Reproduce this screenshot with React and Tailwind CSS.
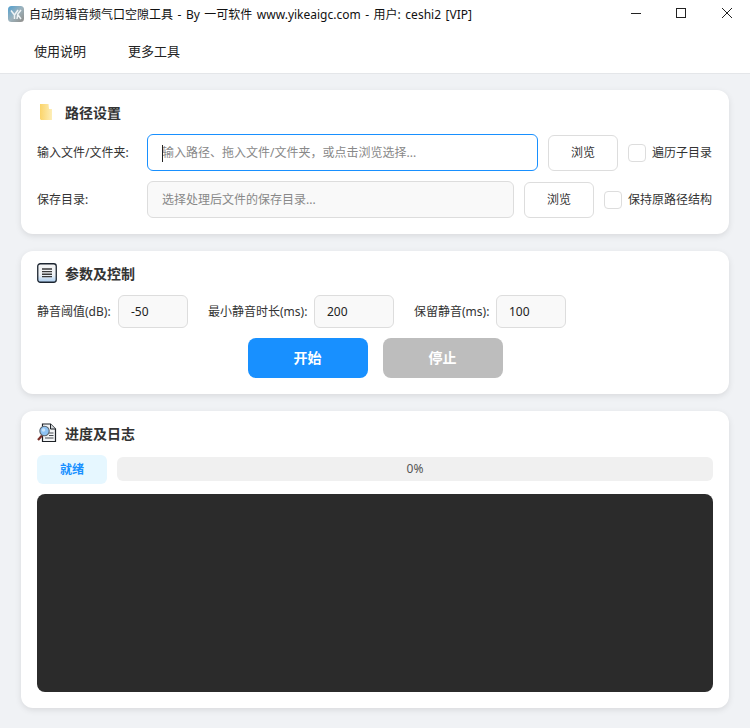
import React from 'react';

const FONT = 'font-["Noto_Sans","Noto_Sans_CJK_SC",sans-serif]';

function AppIcon() {
  return (
    <svg width="16" height="16" viewBox="0 0 16 16" className="shrink-0 -mt-[2px]">
      <defs>
        <linearGradient id="appBg" x1="0" y1="0" x2="1" y2="1">
          <stop offset="0" stopColor="#4f9fd0" />
          <stop offset="0.5" stopColor="#9db3bd" />
          <stop offset="1" stopColor="#8f8c88" />
        </linearGradient>
      </defs>
      <rect width="16" height="16" rx="3.5" fill="url(#appBg)" />
      <path d="M3 4.5 L6.5 9 V13 M10 4 L6.5 9 M9 13 L9.8 8 L13 4 M10 9 L13 13" stroke="#eef3f5" strokeWidth="1.5" fill="none" />
    </svg>
  );
}

function FolderIcon() {
  return (
    <svg width="20" height="20" viewBox="0 0 20 20" className="shrink-0">
      <defs>
        <linearGradient id="folderBg" x1="0" y1="0" x2="1" y2="0">
          <stop offset="0" stopColor="#fbd46a" />
          <stop offset="1" stopColor="#fdeeb8" />
        </linearGradient>
      </defs>
      <path d="M3 2 H11.5 L12 7 H15 V18 H4 L3 17 Z" fill="url(#folderBg)" />
    </svg>
  );
}

function ListIcon() {
  return (
    <svg width="20" height="20" viewBox="0 0 20 20" className="shrink-0">
      <defs>
        <linearGradient id="listBg" x1="0" y1="0" x2="0" y2="1">
          <stop offset="0" stopColor="#f4f4f4" />
          <stop offset="0.6" stopColor="#eef2f6" />
          <stop offset="1" stopColor="#a9cdf0" />
        </linearGradient>
      </defs>
      <rect x="0.75" y="0.75" width="18.5" height="18.5" rx="2.5" fill="url(#listBg)" stroke="#1c2530" strokeWidth="1.3" />
      <path d="M5 6 H15 M5 8.6 H15 M5 11.2 H15 M5 13.6 H15" stroke="#3a3a3a" strokeWidth="1.4" />
    </svg>
  );
}

function SearchDocIcon() {
  return (
    <svg width="20" height="20" viewBox="0 0 20 20" className="shrink-0">
      <path d="M5.5 1 H13.5 L18.5 6 V18.5 H5.5 Z" fill="#f2f4f6" stroke="#1d2126" strokeWidth="1.2" />
      <path d="M13.5 1 V6 H18.5" fill="#d5d9dd" stroke="#1d2126" strokeWidth="1" />
      <path d="M12 10 H16.5 M12 12.5 H16.5 M8 15 H16.5" stroke="#4a4f55" strokeWidth="1" />
      <path d="M5 12.5 L1 17" stroke="#7a2f28" strokeWidth="2.2" />
      <circle cx="7.5" cy="8" r="4.7" fill="#8fc4f5" stroke="#5b6670" strokeWidth="1.1" />
      <circle cx="6.5" cy="7" r="1.8" fill="#c7e3fb" />
    </svg>
  );
}

function CardTitle({ icon, children }) {
  return (
    <div className="flex items-center gap-2 h-5">
      {icon}
      <h2 className="relative top-px text-sm leading-5 font-bold text-[#333333]">{children}</h2>
    </div>
  );
}

function Card({ className, children }) {
  return (
    <section className={`bg-white rounded-xl shadow-[0_2px_6px_rgba(0,0,0,0.1)] ${className}`}>
      {children}
    </section>
  );
}

function BrowseButton() {
  return (
    <button className="w-[70px] h-9 shrink-0 rounded-md border border-[#dddddd] bg-white text-xs text-[#333333]">
      浏览
    </button>
  );
}

function PathRow({ label, placeholder, check, focused }) {
  return (
    <div className="flex items-center h-[37px]">
      <label className="w-[110px] shrink-0 text-xs text-[#333333]">{label}</label>
      <div
        className={`relative flex-1 h-[37px] rounded-md flex items-center pl-[14px] text-xs text-[#888888] border ${
          focused ? 'border-[#1890ff] bg-white' : 'border-[#dddddd] bg-[#f9f9f9]'
        }`}
      >
        {focused && <span className="absolute left-[14px] top-[10px] w-px h-[17px] bg-[#222222]" />}
        {placeholder}
      </div>
      <div className="ml-[10px]">
        <BrowseButton />
      </div>
      <span className="ml-[10px] w-[18px] h-[18px] shrink-0 rounded border border-[#dddddd] bg-white" />
      <span className="ml-[6px] pr-px text-xs text-[#333333] whitespace-nowrap">{check}</span>
    </div>
  );
}

function NumField({ label, value, labelWidth, width, className }) {
  return (
    <div className={`flex items-center gap-[6px] ${className}`}>
      <label className={`text-xs text-[#333333] whitespace-nowrap ${labelWidth}`}>{label}</label>
      <div className={`h-[33px] rounded-md border border-[#dddddd] bg-[#f9f9f9] flex items-center pl-[12px] text-xs text-[#222222] ${width}`}>
        {value}
      </div>
    </div>
  );
}

export default function App() {
  return (
    <div className={`${FONT} w-[750px] h-[728px] flex flex-col bg-[#f0f2f5] overflow-hidden`}>
      {/* Title bar */}
      <header className="bg-white h-[30px] shrink-0 flex items-center pl-2">
        <AppIcon />
        <span className="ml-[5px] text-xs text-[#111111] whitespace-nowrap [word-spacing:1.4px]">
          自动剪辑音频气口空隙工具 - By 一可软件 www.yikeaigc.com - 用户: ceshi2 [VIP]
        </span>
        <div className="ml-auto flex items-center">
          <svg width="46" height="26" viewBox="0 0 46 26">
            <path d="M19 11.5 H29" stroke="#222" strokeWidth="1" />
          </svg>
          <svg width="46" height="26" viewBox="0 0 46 26">
            <rect x="18.5" y="6.5" width="9" height="9" fill="none" stroke="#222" strokeWidth="1" />
          </svg>
          <svg width="46" height="26" viewBox="0 0 46 26">
            <path d="M18 6 L28 16 M28 6 L18 16" stroke="#222" strokeWidth="1" />
          </svg>
        </div>
      </header>

      {/* Menu */}
      <nav className="bg-white h-[44px] shrink-0 border-b border-[#e4e6e9] flex items-center gap-[42px] pl-[34px] text-[13px] text-[#222222]">
        <span>使用说明</span>
        <span>更多工具</span>
      </nav>

      <main className="flex-1 flex flex-col gap-[17px] pt-4 px-[21px]">
        <Card className="h-[144px] px-4 pt-3">
          <CardTitle icon={<FolderIcon />}>路径设置</CardTitle>
          <div className="mt-3 flex flex-col gap-[10px]">
            <PathRow label="输入文件/文件夹:" placeholder="输入路径、拖入文件/文件夹，或点击浏览选择..." check="遍历子目录" focused />
            <PathRow label="保存目录:" placeholder="选择处理后文件的保存目录..." check="保持原路径结构" />
          </div>
        </Card>

        <Card className="h-[143px] px-4 pt-3">
          <CardTitle icon={<ListIcon />}>参数及控制</CardTitle>
          <div className="mt-3 flex items-center">
            <NumField label="静音阈值(dB):" value="-50" labelWidth="w-[75px]" width="w-[70px]" />
            <NumField label="最小静音时长(ms):" value="200" labelWidth="w-[100px]" width="w-[80px]" className="ml-5" />
            <NumField label="保留静音(ms):" value="100" labelWidth="w-[76px]" width="w-[70px]" className="ml-5" />
          </div>
          <div className="mt-[10px] flex justify-center gap-[15px]">
            <button className="w-[120px] h-10 rounded-lg bg-[#1890ff] text-white text-sm font-bold">开始</button>
            <button className="w-[120px] h-10 rounded-lg bg-[#bdbdbd] text-white text-sm font-bold">停止</button>
          </div>
        </Card>

        <Card className="h-[297px] px-4 pt-3">
          <CardTitle icon={<SearchDocIcon />}>进度及日志</CardTitle>
          <div className="mt-3 flex items-center gap-[10px]">
            <div className="w-[70px] h-[29px] rounded-md bg-[#e6f7ff] flex items-center justify-center text-xs font-bold text-[#1890ff]">
              就绪
            </div>
            <div className="flex-1 h-6 mb-px rounded-md bg-[#f0f0f0] flex items-center justify-center text-xs text-[#555555]">
              0%
            </div>
          </div>
          <div className="mt-[10px] h-[198px] rounded-lg bg-[#2b2b2b]" />
        </Card>
      </main>
    </div>
  );
}
